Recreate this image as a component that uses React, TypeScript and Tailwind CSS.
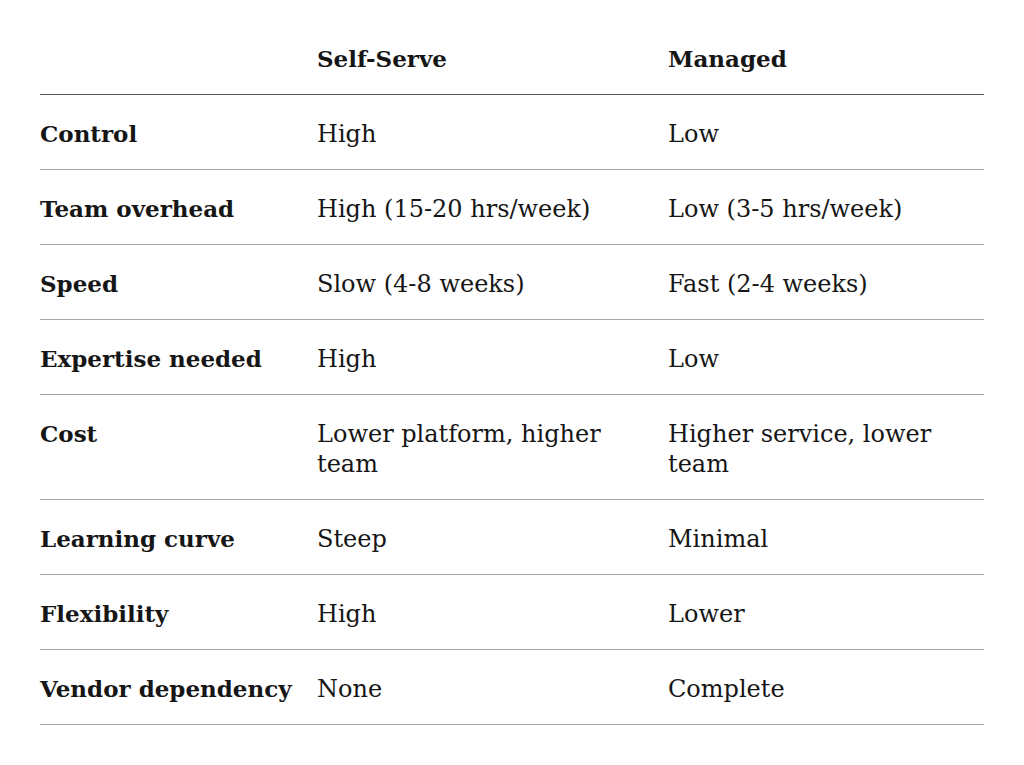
type Row = {
  label: string;
  selfServe: string;
  managed: string;
};

const rows: Row[] = [
  { label: "Control", selfServe: "High", managed: "Low" },
  { label: "Team overhead", selfServe: "High (15-20 hrs/week)", managed: "Low (3-5 hrs/week)" },
  { label: "Speed", selfServe: "Slow (4-8 weeks)", managed: "Fast (2-4 weeks)" },
  { label: "Expertise needed", selfServe: "High", managed: "Low" },
  { label: "Cost", selfServe: "Lower platform, higher team", managed: "Higher service, lower team" },
  { label: "Learning curve", selfServe: "Steep", managed: "Minimal" },
  { label: "Flexibility", selfServe: "High", managed: "Lower" },
  { label: "Vendor dependency", selfServe: "None", managed: "Complete" },
];

const cell = "pt-[24px] pb-[20px] pr-6 align-top leading-[30px]";

export default function App() {
  return (
    <div className="min-h-screen bg-white px-[40px] pt-[20px] font-['DejaVu_Serif',serif] text-[#161616]">
      <table className="w-[944px] table-fixed border-collapse">
        <colgroup>
          <col className="w-[277px]" />
          <col className="w-[351px]" />
          <col className="w-[316px]" />
        </colgroup>
        <thead>
          <tr className="border-b border-[#555555]">
            <th className={`${cell} text-left text-[23px] font-bold`} />
            <th className={`${cell} text-left text-[23px] font-bold`}>Self-Serve</th>
            <th className={`${cell} text-left text-[23px] font-bold`}>Managed</th>
          </tr>
        </thead>
        <tbody>
          {rows.map((row) => (
            <tr key={row.label} className="border-b border-[#a6a6a6]">
              <td className={`${cell} text-[23px] font-bold`}>{row.label}</td>
              <td className={`${cell} text-[24px]`}>{row.selfServe}</td>
              <td className={`${cell} text-[24px]`}>{row.managed}</td>
            </tr>
          ))}
        </tbody>
      </table>
    </div>
  );
}
